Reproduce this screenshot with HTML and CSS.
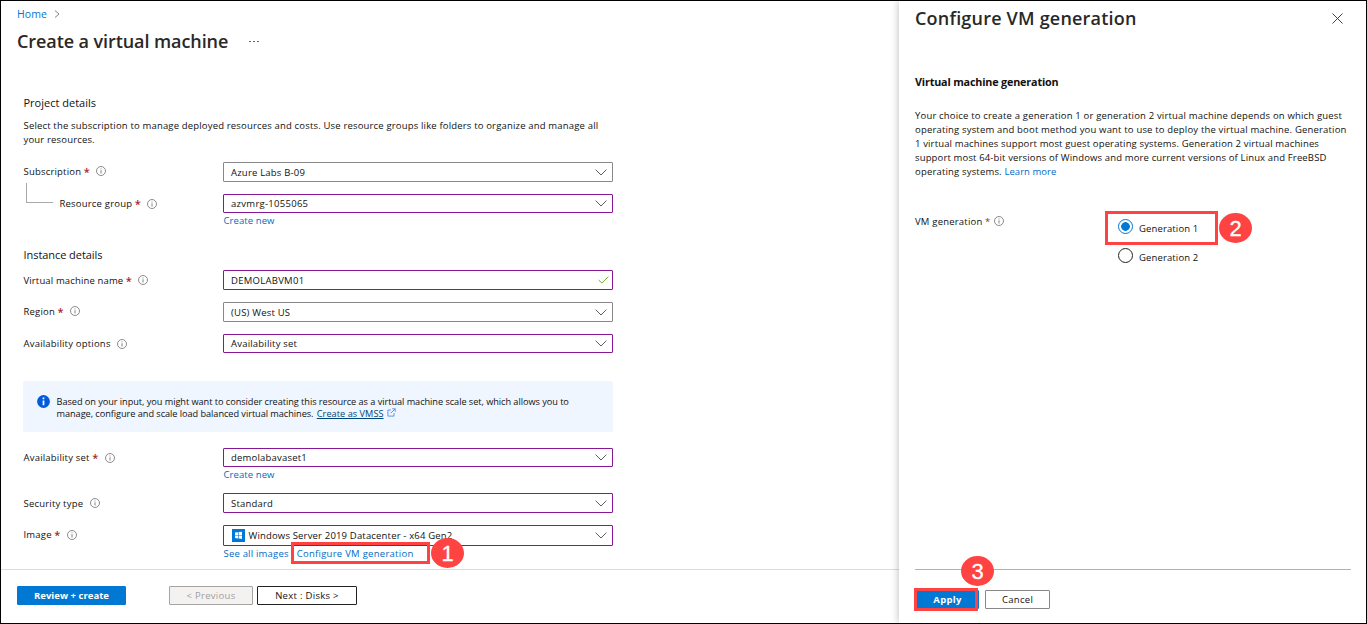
FILE: index.html
```html
<!DOCTYPE html>
<html lang="en">
<head>
<meta charset="utf-8">
<title>Create a virtual machine</title>
<link rel="stylesheet" href="styles.css">
</head>
<body>
<svg class="defs" width="0" height="0">
  <symbol id="info" viewBox="0 0 10 10"><circle cx="5" cy="5" r="4.5" fill="none" stroke="#777" stroke-width=".85"/><path d="M5 4.3v3.2M5 2.5v.9" stroke="#777" stroke-width=".9"/></symbol>
  <symbol id="chev" viewBox="0 0 12 7"><path d="M.6 .6L6 6L11.4 .6" fill="none" stroke="#555" stroke-width=".95"/></symbol>
</svg>
<div class="page">
  <main class="main">
    <nav class="crumb"><a>Home</a><svg width="6" height="8" viewBox="0 0 6 8"><path d="M1 .5L5 4L1 7.5" fill="none" stroke="#777" stroke-width=".9"/></svg></nav>
    <div class="heading"><h1>Create a virtual machine</h1><span class="dots"><i></i><i></i><i></i></span></div>
    <section class="form">
      <h2>Project details</h2>
      <p class="intro"><span>Select the subscription to manage deployed resources and costs. Use resource groups like folders to organize and manage all</span><br><span>your resources.</span></p>
      <div class="row up r-sub"><div class="label"><span>Subscription</span><b>*</b><svg class="info"><use href="#info"/></svg></div><div class="field grey"><span>Azure Labs B-09</span><svg class="chev"><use href="#chev"/></svg></div></div>
      <div class="row short r-12"><div class="label child"><span>Resource group</span><b>*</b><svg class="info"><use href="#info"/></svg></div><div class="field"><span class="wide">azvmrg-1055065</span><svg class="chev"><use href="#chev"/></svg></div></div>
      <div class="links"><a class="new">Create new</a></div>
      <h2 class="second">Instance details</h2>
      <div class="row r-5"><div class="label name"><span>Virtual machine name</span><b>*</b><svg class="info"><use href="#info"/></svg></div><div class="field"><span class="wide">DEMOLABVM01</span><svg class="tick" viewBox="0 0 11 8"><path d="M.6 4L3.9 7L10.4 .6" fill="none" stroke="#6bb02a" stroke-width="1"/></svg></div></div>
      <div class="row up r-12"><div class="label"><span>Region</span><b>*</b><svg class="info"><use href="#info"/></svg></div><div class="field grey"><span>(US) West US</span><svg class="chev"><use href="#chev"/></svg></div></div>
      <div class="row short r-12"><div class="label"><span>Availability options</span><svg class="info"><use href="#info"/></svg></div><div class="field"><span>Availability set</span><svg class="chev"><use href="#chev"/></svg></div></div>
      <div class="notice"><svg class="badge-i" viewBox="0 0 13 13"><circle cx="6.5" cy="6.5" r="6.4" fill="#015cda"/><path d="M6.5 5.4v4.8M6.5 2.6v1.7" stroke="#fff" stroke-width="1.7"/></svg><p><span>Based on your input, you might want to consider creating this resource as a virtual machine scale set, which allows you to</span><br><span>manage, configure and scale load balanced virtual machines.</span> <a>Create as VMSS</a><svg class="ext" viewBox="0 0 9 9"><path d="M4 2H.9V8.1H7V5M5.2 .8H8.2V3.8M8.2 .8L3.8 5.2" fill="none" stroke="#4b8df0" stroke-width=".9"/></svg></p></div>
      <div class="row short r-16"><div class="label"><span>Availability set</span><b>*</b><svg class="info"><use href="#info"/></svg></div><div class="field"><span>demolabavaset1</span><svg class="chev"><use href="#chev"/></svg></div></div>
      <div class="links"><a class="new">Create new</a></div>
      <div class="row r-10"><div class="label"><span>Security type</span><svg class="info"><use href="#info"/></svg></div><div class="field"><span>Standard</span><svg class="chev"><use href="#chev"/></svg></div></div>
      <div class="row tall up r-12"><div class="label"><span>Image</span><b>*</b><svg class="info"><use href="#info"/></svg></div><div class="field"><svg class="win" viewBox="0 0 13 13"><path fill="#0078d7" d="M0 0h13v13H0z"/><path fill="#fff" d="M3 3.6L6 3.2V6H3zM6.6 3.1L10 2.7V6H6.6zM3 6.6H6V9.4L3 9zM6.6 6.6H10V9.9L6.6 9.5z"/></svg><span class="img">Windows Server 2019 Datacenter - x64 Gen2</span><svg class="chev"><use href="#chev"/></svg></div></div>
      <div class="links"><a>See all images</a><a class="cfg">Configure VM generation</a></div>
    </section>
    <footer class="footer"><button class="btn primary rev">Review + create</button><button class="btn disabled">&lt; Previous</button><button class="btn next">Next : Disks &gt;</button></footer>
  </main>
  <aside class="blade">
    <header><h1>Configure VM generation</h1><svg class="close" viewBox="0 0 11 11"><path d="M.5 .5L10.5 10.5M10.5 .5L.5 10.5" stroke="#444" stroke-width="1"/></svg></header>
    <h3>Virtual machine generation</h3>
    <p class="desc"><span>Your choice to create a generation 1 or generation 2 virtual machine depends on which guest</span><br><span>operating system and boot method you want to use to deploy the virtual machine. Generation</span><br><span class="tight">1 virtual machines support most guest operating systems. Generation 2 virtual machines</span><br><span class="tight">support most 64-bit versions of Windows and more current versions of Linux and FreeBSD</span><br><span>operating systems.</span> <a>Learn more</a></p>
    <div class="gen"><div class="label"><span>VM generation</span><b>*</b><svg class="info"><use href="#info"/></svg></div>
      <div class="radios"><label class="on"><i></i><span>Generation 1</span></label><label><i></i><span>Generation 2</span></label></div></div>
    <div class="actions"><button class="btn primary apply">Apply</button><button class="btn cancel">Cancel</button></div>
  </aside>
  <div class="mark m1"></div><div class="num n1">1</div>
  <div class="mark m2"></div><div class="num n2">2</div>
  <div class="mark m3"></div><div class="num n3">3</div>
</div>
</body>
</html>
```
FILE: styles.css
```css
* { box-sizing: border-box; }
body { margin: 0; font-family: "Open Sans", "Noto Sans", sans-serif; font-size: 9.5px; color: #111; letter-spacing: .2px; }
h1, h2, h3, p { margin: 0; }
.defs { position: absolute; }
a { color: #006cc4; }
svg { flex: none; }
.page { position: relative; display: flex; width: 1367px; height: 624px; border: 1px solid #000; background: #fff; overflow: hidden; }
.main { display: flex; flex-direction: column; flex: 1; }
.crumb { display: flex; align-items: center; gap: 7px; height: 26px; padding-left: 16px; font-size: 10.5px; }
.crumb a { color: #0078d4; letter-spacing: .1px; }
.heading { display: flex; align-items: center; height: 28px; padding-left: 16px; }
h1 { font-size: 18px; font-weight: 600; letter-spacing: -.08px; color: #292827; white-space: nowrap; }
.dots { display: flex; gap: 2px; margin-left: 21px; }
.dots i { width: 2px; height: 1px; background: #666; }
.form { padding: 38px 0 0 22px; width: 612px; white-space: nowrap; }
h2 { height: 20px; padding-left: .5px; line-height: 20px; font-size: 11px; font-weight: 400; letter-spacing: 0; }
h2.second { margin-top: 16px; letter-spacing: -.06px; }
.intro { margin-top: 6px; padding-left: .5px; line-height: 14px; letter-spacing: .17px; }
.row { display: flex; height: 20px; }
.short { height: 19px; }
.tall { height: 21px; }
.up .label { padding-bottom: 2px; }
.r-sub { margin-top: 15px; }
.r-5 { margin-top: 5px; }
.r-10 { margin-top: 10px; }
.r-12 { margin-top: 12px; }
.r-16 { margin-top: 16px; }
.label { display: flex; align-items: center; width: 200px; padding-left: .5px; position: relative; }
.label b { margin-left: 2.5px; color: #a4262c; font-weight: 600; font-size: 11px; letter-spacing: 0; }
.label .info { width: 10px; height: 10px; margin-left: 6.5px; }
.label.name { letter-spacing: .14px; }
.label.child { padding-left: 36.5px; }
.child::before { content: ""; position: absolute; left: 3px; top: -11px; width: 26px; height: 19px; border: solid #aaa; border-width: 0 0 1px 1px; }
.field { display: flex; align-items: center; width: 390px; padding: 0 5.5px 0 7px; border: 1px solid #881798; border-radius: 1px; }
.field .wide { letter-spacing: .28px; }
.field .img { letter-spacing: .17px; }
.field.grey { border-color: #8a8886; }
.chev { width: 12px; height: 7px; margin-left: auto; }
.tick { width: 11px; height: 8px; margin-left: auto; margin-right: -2px; }
.win { width: 13px; height: 13px; margin: 0 3.5px 0 1px; }
.links { display: flex; height: 16px; line-height: 16px; padding-left: 200.5px; gap: 8px; }
.links .new { letter-spacing: .08px; }
.links .cfg { letter-spacing: .27px; }
.notice { display: flex; height: 51px; margin: 28px 0 0; padding: 15px 0 0 14px; background: #f0f6ff; border-radius: 2px; width: 590px; font-size: 9.2px; line-height: 12px; letter-spacing: -.05px; }
.badge-i { width: 13px; height: 13px; margin: -1px 6.5px 0 0; }
.notice a { color: #004578; text-decoration: underline; margin-left: 1px; letter-spacing: .03px; }
.ext { width: 9px; height: 9px; margin-left: 3px; }
.footer { display: flex; margin-top: 7px; padding: 16px 0 0 16px; border-top: 1px solid #ddd; }
.btn { height: 19px; padding: 0; font: inherit; line-height: 17px; letter-spacing: .3px; border: 1px solid #222; border-radius: 1px; background: #fff; color: #111; white-space: nowrap; }
.btn.primary { border-color: #0078d4; background: #0078d4; color: #fff; font-weight: 700; }
.btn.rev { width: 109px; letter-spacing: .03px; }
.btn.disabled { width: 84px; margin-left: 43px; background: #f3f2f1; border-color: #a5a4a2; color: #a19f9d; }
.next { width: 100px; margin-left: 4px; }
.blade { display: flex; flex-direction: column; width: 467px; padding: 0 15px 0 16px; background: #fff; box-shadow: 0 0 8px rgba(0,0,0,.28); white-space: nowrap; }
.blade header { display: flex; align-items: center; justify-content: space-between; height: 35px; padding-right: 8px; }
.blade h1 { margin-top: -2px; letter-spacing: .2px; }
.close { width: 11px; height: 11px; }
h3 { margin-top: 36px; height: 20px; line-height: 20px; font-size: 10.8px; font-weight: 700; letter-spacing: -.18px; }
.desc { margin-top: 17px; line-height: 14px; letter-spacing: .175px; }
.desc a { letter-spacing: .05px; }
.desc .tight { letter-spacing: .145px; }
.gen { display: flex; margin-top: 32px; }
.gen .label { height: 20px; width: 203px; padding-left: 0; }
.gen .label b { font-size: 9.5px; font-weight: 400; }
.gen .label .info { margin-left: 4px; }
.radios { display: flex; flex-direction: column; gap: 14px; padding-top: 8px; }
.radios label { display: flex; align-items: center; height: 15px; gap: 6px; letter-spacing: .13px; }
.radios i { width: 15px; height: 15px; border: 1px solid #222; border-radius: 50%; }
.radios span { padding-top: 3px; }
.radios .on i { border-color: #0078d4; background: radial-gradient(circle, #0078d4 4px, #fff 4.6px); }
.actions { display: flex; gap: 6px; margin-top: auto; height: 54px; padding: 20px 0 0 1px; border-top: 1px solid #b3b0ad; }
.apply { width: 63px; }
.btn.cancel { width: 65px; border-color: #8a8886; }
.mark { position: absolute; border: 3px solid #ff4242; }
.m1 { left: 290px; top: 541px; width: 139px; height: 22px; }
.m2 { left: 1104px; top: 210px; width: 113px; height: 34px; }
.m3 { left: 913px; top: 587px; width: 64px; height: 23px; }
.num { position: absolute; width: 33px; height: 30px; border-radius: 50%; background: #ff4242; color: #fff; font: 22px/31px "Liberation Sans", sans-serif; text-align: center; letter-spacing: 0; -webkit-text-stroke: .3px #fff; }
.n1 { left: 430px; top: 537px; }
.n2 { left: 1218px; top: 212px; }
.n3 { left: 960px; top: 555px; }
```
